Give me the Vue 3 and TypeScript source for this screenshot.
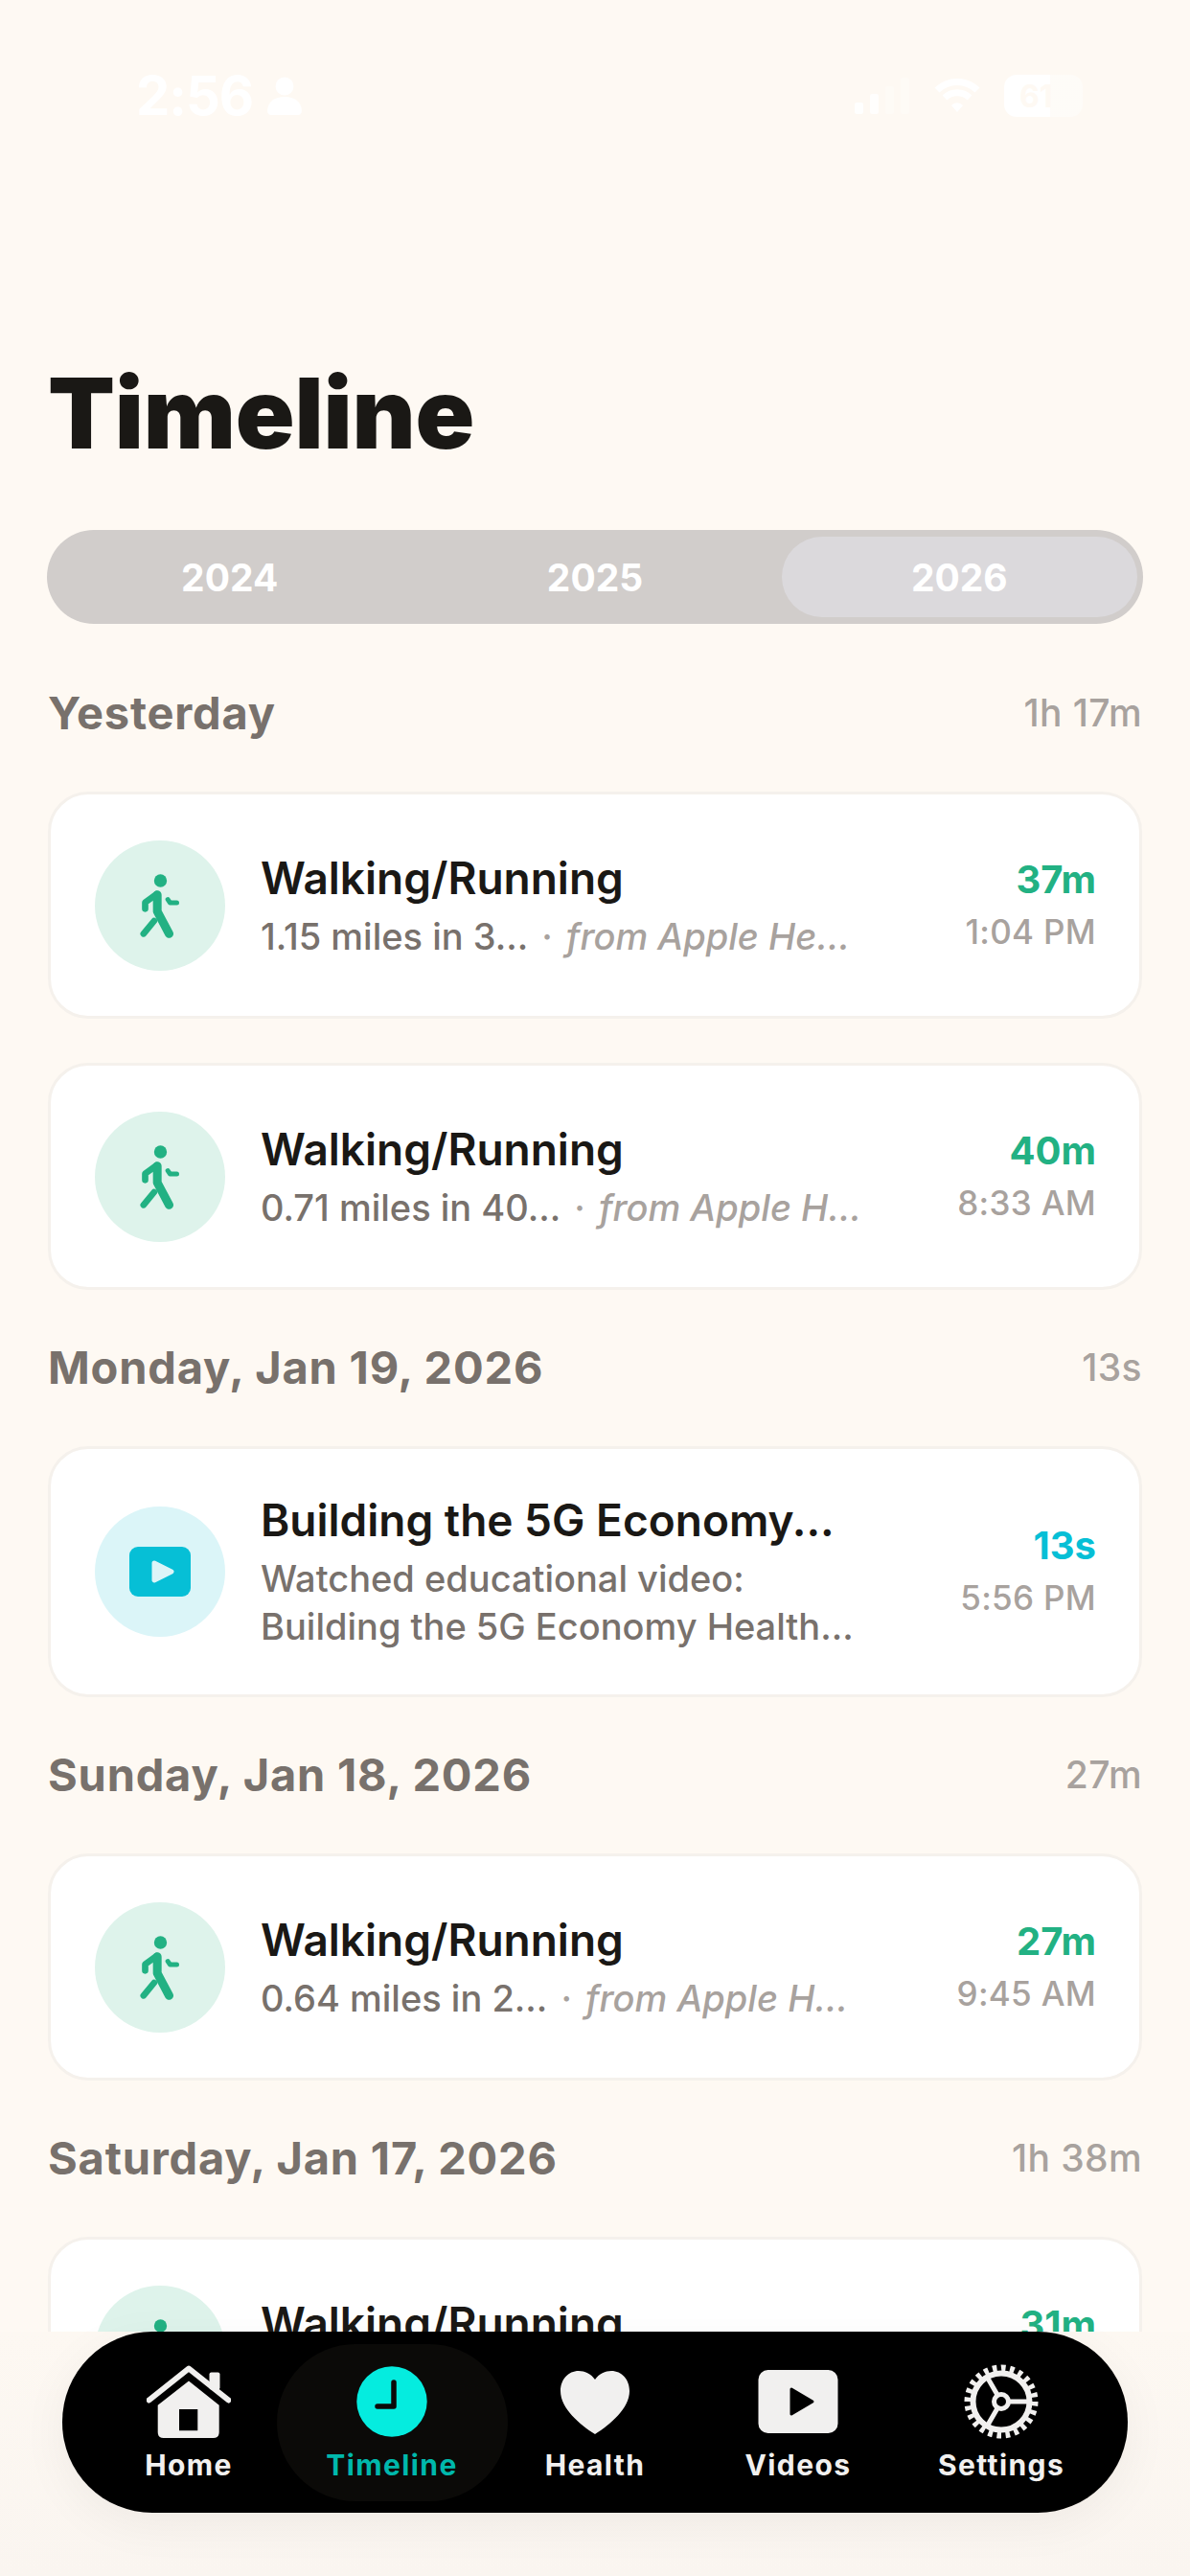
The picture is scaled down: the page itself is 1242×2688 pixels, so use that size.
<script setup lang="ts">
interface Activity {
  kind: "walk" | "video";
  title: string;
  detail: string;
  source?: string;
  detail2?: string;
  duration: string;
  time: string;
}

interface Day {
  label: string;
  total: string;
  items: Activity[];
}

const years = ["2024", "2025", "2026"];

const days: Day[] = [
  {
    label: "Yesterday",
    total: "1h 17m",
    items: [
      { kind: "walk", title: "Walking/Running", detail: "1.15 miles in 3...", source: "from Apple He...", duration: "37m", time: "1:04 PM" },
      { kind: "walk", title: "Walking/Running", detail: "0.71 miles in 40...", source: "from Apple H...", duration: "40m", time: "8:33 AM" },
    ],
  },
  {
    label: "Monday, Jan 19, 2026",
    total: "13s",
    items: [
      {
        kind: "video",
        title: "Building the 5G Economy...",
        detail: "Watched educational video:",
        detail2: "Building the 5G Economy Health...",
        duration: "13s",
        time: "5:56 PM",
      },
    ],
  },
  {
    label: "Sunday, Jan 18, 2026",
    total: "27m",
    items: [
      { kind: "walk", title: "Walking/Running", detail: "0.64 miles in 2...", source: "from Apple H...", duration: "27m", time: "9:45 AM" },
    ],
  },
  {
    label: "Saturday, Jan 17, 2026",
    total: "1h 38m",
    items: [
      { kind: "walk", title: "Walking/Running", detail: "0.52 miles in 3...", source: "from Apple H...", duration: "31m", time: "7:12 PM" },
    ],
  },
];

const tabs = ["Home", "Timeline", "Health", "Videos", "Settings"];
</script>

<template>
  <div class="page">
    <div class="status">
      <div class="status-left">
        <span class="clock">2:56</span>
        <svg class="person" viewBox="0 0 34 38">
          <circle cx="17" cy="9.5" r="9" />
          <path d="M0 34c0-9 7-14 17-14s17 5 17 14q0 4-4 4H4q-4 0-4-4z" />
        </svg>
      </div>
      <div class="status-right">
        <svg class="signal" viewBox="0 0 58 38">
          <rect x="0" y="26" width="9" height="12" rx="2" opacity="0.9" />
          <rect x="16" y="17" width="9" height="21" rx="2" opacity="0.8" />
          <rect x="32" y="9" width="9" height="29" rx="2" opacity="0.3" />
          <rect x="48" y="0" width="9" height="38" rx="2" opacity="0.3" />
        </svg>
        <svg class="wifi" viewBox="0 0 50 38">
          <path d="M4 13a30 30 0 0 1 42 0" />
          <path d="M12 21a19 19 0 0 1 26 0" />
          <path d="M25 36l-6-7a8 8 0 0 1 12 0z" class="wifi-dot" />
        </svg>
        <div class="battery"><span>61</span></div>
      </div>
    </div>

    <h1 class="title">Timeline</h1>

    <div class="years">
      <div v-for="y in years" :key="y" class="year" :class="{ active: y === '2026' }">{{ y }}</div>
    </div>

    <section v-for="day in days" :key="day.label" class="day">
      <div class="day-head">
        <span class="day-label">{{ day.label }}</span>
        <span class="day-total">{{ day.total }}</span>
      </div>
      <div class="cards">
        <div v-for="(item, i) in day.items" :key="i" class="card" :class="{ tall: item.kind === 'video' }">
          <div class="badge" :class="item.kind">
            <svg v-if="item.kind === 'walk'" class="walk-icon" viewBox="190 145 140 210">
              <circle cx="260" cy="172" r="20" fill="#22b183" />
              <g fill="none" stroke="#22b183" stroke-linecap="round" stroke-linejoin="round">
                <path d="M212 260V240L248 214" stroke-width="20" />
                <path d="M250 216V268L287 338" stroke-width="27" />
                <path d="M240 298L207 338" stroke-width="20" />
                <path d="M283 231L290 241H311" stroke-width="15" />
              </g>
            </svg>
            <svg v-else class="play-icon" viewBox="0 0 64 52">
              <rect width="64" height="52" rx="9" fill="#06bfd6" />
              <path d="M26 17L44 26L26 35Z" fill="#dcf5f8" stroke="#dcf5f8" stroke-width="5" stroke-linejoin="round" />
            </svg>
          </div>
          <div class="body">
            <div class="name">{{ item.title }}</div>
            <div class="detail">
              {{ item.detail }}<template v-if="item.source"><span class="dot">·</span><em>{{ item.source }}</em></template>
            </div>
            <div v-if="item.detail2" class="detail">{{ item.detail2 }}</div>
          </div>
          <div class="meta">
            <div class="duration" :class="item.kind">{{ item.duration }}</div>
            <div class="time">{{ item.time }}</div>
          </div>
        </div>
      </div>
    </section>

    <div class="dock">
      <nav class="tabs">
        <div v-for="tab in tabs" :key="tab" class="tab" :class="{ active: tab === 'Timeline' }">
          <svg class="tab-icon" viewBox="0 0 88 78">
            <template v-if="tab === 'Home'">
              <path d="M2.5 37.5L44 4.5L85.5 37.5" fill="none" stroke="#f1f0ef" stroke-width="6" stroke-linecap="round" stroke-linejoin="round" />
              <rect x="65.5" y="8.5" width="11" height="18" rx="2" fill="#f1f0ef" />
              <path
                fill="#f1f0ef"
                fill-rule="evenodd"
                d="M44 17.5L75.7 42.7V71q0 6-6 6H17.7q-6 0-6-6V42.7ZM34 47V69.3H53.3V47Z"
              />
            </template>
            <template v-else-if="tab === 'Timeline'">
              <circle cx="44" cy="39" r="36.7" fill="#05ecdf" />
              <path d="M46 19V44H29" fill="none" stroke="#0b0a08" stroke-width="5.5" stroke-linecap="round" stroke-linejoin="round" />
            </template>
            <template v-else-if="tab === 'Health'">
              <path fill="#f1f0ef" d="M44 16C40 10 33 7 27 7C16 7 8 16 8 28C8 46 28 63 44 73C60 63 80 46 80 28C80 16 72 7 61 7C55 7 48 10 44 16Z" />
            </template>
            <template v-else-if="tab === 'Videos'">
              <rect x="2.5" y="6" width="83" height="66" rx="10" fill="#f1f0ef" />
              <path d="M37 26L59 39L37 52Z" fill="#000" stroke="#000" stroke-width="3" stroke-linejoin="round" />
            </template>
            <template v-else>
              <g fill="none" stroke="#f1f0ef">
                <circle cx="44" cy="39" r="35" stroke-width="7" pathLength="48" stroke-dasharray="1 1" />
                <circle cx="44" cy="39" r="29.5" stroke-width="6" />
                <circle cx="44" cy="39" r="7.5" stroke-width="5" />
                <path d="M52 39H74M40 32L29 13M40 46L29 65" stroke-width="5" />
              </g>
            </template>
          </svg>
          <span class="tab-label">{{ tab }}</span>
        </div>
      </nav>
    </div>
  </div>
</template>

<style scoped>
.page {
  position: relative;
  height: 2688px;
  padding: 0 50px;
  box-sizing: border-box;
  overflow: hidden;
  background: #fef9f3;
  font-family: Inter, "Liberation Sans", sans-serif;
}

.status {
  display: flex;
  justify-content: space-between;
  align-items: center;
  height: 44px;
  padding: 78px 62px 0 92px;
  color: #fff;
}

.status-left {
  display: flex;
  align-items: center;
  gap: 14px;
}

.clock {
  font-size: 56px;
  font-weight: 700;
  line-height: 44px;
  letter-spacing: -1px;
}

.person {
  width: 38px;
  height: 40px;
  fill: #fff;
}

.status-right {
  display: flex;
  align-items: center;
  gap: 24px;
}

.signal {
  width: 58px;
  height: 38px;
  fill: #fff;
}

.wifi {
  width: 50px;
  height: 38px;
  fill: none;
  stroke: #fff;
  stroke-width: 7;
}

.wifi-dot {
  fill: #fff;
  stroke: none;
}

.battery {
  display: flex;
  align-items: center;
  width: 82px;
  height: 44px;
  padding-left: 16px;
  box-sizing: border-box;
  border-radius: 13px;
  background: linear-gradient(90deg, #fff 58%, rgba(255, 255, 255, 0.45) 58%);
  color: #fef9f3;
  font-size: 32px;
  font-weight: 700;
}

.title {
  margin: 255px 0 0;
  color: #1a1815;
  font-size: 102px;
  font-weight: 900;
  line-height: 108px;
  letter-spacing: -0.2px;
}

.years {
  display: grid;
  grid-template-columns: repeat(3, 1fr);
  height: 98px;
  margin: 68px -1px 0;
  border-radius: 49px;
  background: #d1cdcb;
}

.year {
  display: flex;
  align-items: center;
  justify-content: center;
  color: #fff;
  font-size: 39px;
  font-weight: 700;
}

.year.active {
  margin: 7px 6px 7px 4px;
  border-radius: 42px;
  background: #dbd9dc;
}

.day {
  margin-top: 62px;
}

.day + .day {
  margin-top: 50px;
}

.day-head {
  display: flex;
  justify-content: space-between;
  align-items: center;
  height: 60px;
  margin-bottom: 53px;
}

.day-label {
  color: #78716c;
  font-size: 47px;
  font-weight: 700;
  letter-spacing: 0.8px;
}

.day-total {
  color: #a8a29e;
  font-size: 39px;
  font-weight: 500;
  letter-spacing: 0.4px;
}

.cards {
  display: flex;
  flex-direction: column;
  gap: 46px;
}

.card {
  display: flex;
  align-items: center;
  gap: 37px;
  height: 237px;
  padding: 0 45px 0 46px;
  box-sizing: border-box;
  border: 3px solid #f5f1ec;
  border-radius: 42px;
  background: #fff;
}

.card.tall {
  height: 262px;
}

.badge {
  display: flex;
  flex: none;
  align-items: center;
  justify-content: center;
  width: 136px;
  height: 136px;
  border-radius: 50%;
}

.badge.walk {
  background: #def3eb;
}

.badge.video {
  background: #dbf5f8;
}

.walk-icon {
  width: 47px;
  height: 70px;
}

.play-icon {
  width: 64px;
  height: 52px;
}

.body {
  flex: 1;
  min-width: 0;
}

.name {
  margin-bottom: 8px;
  color: #1a1815;
  font-size: 46px;
  font-weight: 600;
  line-height: 56px;
  white-space: nowrap;
}

.detail {
  color: #78716c;
  font-size: 38px;
  font-weight: 500;
  line-height: 50px;
  white-space: nowrap;
}

.detail em {
  color: #a8a29e;
}

.dot {
  margin: 0 14px;
  color: #a8a29e;
}

.meta {
  flex: none;
  text-align: right;
}

.duration {
  font-size: 40px;
  font-weight: 700;
  line-height: 50px;
}

.duration.walk {
  color: #22b183;
}

.duration.video {
  color: #06bfd6;
}

.time {
  margin-top: 4px;
  color: #a8a29e;
  font-size: 35px;
  font-weight: 500;
  line-height: 50px;
  letter-spacing: 0.3px;
}

.dock {
  position: absolute;
  top: 2433px;
  right: 0;
  bottom: 0;
  left: 0;
  background: linear-gradient(180deg, #fdf8f2, #faf5f0);
}

.tabs {
  display: grid;
  grid-template-columns: repeat(5, 1fr);
  height: 189px;
  margin: 0 65px;
  padding: 0 26px;
  box-sizing: border-box;
  border-radius: 94px;
  background: #000;
  box-shadow: 0 12px 50px rgba(0, 0, 0, 0.05);
}

.tab {
  position: relative;
  display: flex;
  flex-direction: column;
  align-items: center;
  padding-top: 34px;
}

.tab.active::before {
  content: "";
  position: absolute;
  top: 13px;
  bottom: 12px;
  left: -14px;
  right: -15px;
  border-radius: 82px;
  background: #0b0a08;
}

.tab-icon {
  position: relative;
  width: 88px;
  height: 78px;
}

.tab-label {
  position: relative;
  margin-top: 9px;
  color: #f1f0ef;
  font-size: 30px;
  font-weight: 700;
  line-height: 36px;
  letter-spacing: 1.4px;
}

.tab.active .tab-label {
  color: #00b8ac;
}
</style>

<style>
html,
body {
  margin: 0;
  background: #fef9f3;
}
</style>
